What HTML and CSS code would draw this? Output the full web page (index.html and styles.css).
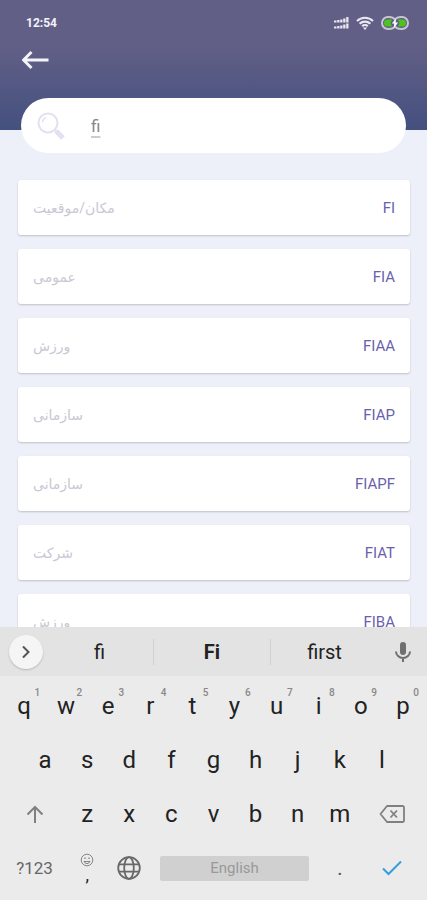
FILE: index.html
```html
<!DOCTYPE html>
<html lang="en">
<head>
    <meta charset="UTF-8">
    <meta name="viewport" content="width=device-width, initial-scale=1.0">
    <title>Search</title>
    <link rel="stylesheet" href="styles.css">
</head>
<body>

    <header class="header">
        <div class="status-bar">
            <span class="time">12:54</span>
            <div class="status-icons">
                <svg width="15" height="12" viewBox="0 0 15 12" fill="#e8e8f2">
                    <path d="M0 3.500h2.500v2H0zM3.200 3h2.300v2.500H3.200zM6.200 2.500h2.300v3H6.200zM9.200 1.500h2.300v4H9.200zM12.200 0h2.300v5.500h-2.300z"/>
                    <path d="M0 9.500h2.500v2H0zM3.200 9h2.300v2.500H3.200zM6.200 8.500h2.300v3H6.200zM9.200 7.500h2.300v4H9.200zM12.200 6.500h2.300v5h-2.300z"/>
                </svg>
                <svg width="18" height="14" viewBox="0 0 18 14" fill="none" stroke="#e8e8f2" stroke-width="2.200">
                    <path d="M1 5a11.500 11.500 0 0 1 16 0M3.600 7.700a7.800 7.800 0 0 1 10.800 0M6.200 10.300a4 4 0 0 1 5.600 0"/>
                    <path d="M9 14l-2.200-2.500h4.400z" fill="#e8e8f2" stroke="none"/>
                </svg>
                <svg width="28" height="14" viewBox="0 0 28 14">
                    <path d="M14 3.500C12.500 1.500 11 1 8 1H7a6 6 0 0 0 0 12h1c3 0 4.500-.5 6-2.500 1.500 2 3 2.500 6 2.500h1a6 6 0 0 0 0-12h-1c-3 0-4.500.5-6 2.500z" fill="#5e5f86" stroke="#c6c6d2" stroke-width="2"/>
                    <path d="M6.500 3.500H11L9.500 7l1.500 3.500H6.500a3.500 3.500 0 0 1 0-7zM17 3.500h4.500a3.500 3.500 0 0 1 0 7H17L18.500 7z" fill="#4cc41c"/>
                    <path d="M15 2.500L10.800 7.500h2.400L12.800 12l4.400-5.500h-2.600z" fill="#fff"/>
                </svg>
            </div>
        </div>
        <a href="#" class="back" aria-label="Back">
            <svg width="28" height="20" viewBox="0 0 28 20" fill="none" stroke="#f3f3fa" stroke-width="3">
                <path d="M26.500 10H2M9.500 2L1.500 10l8 8"/>
            </svg>
        </a>
    </header>

    <form class="search">
        <label for="query" aria-label="Search">
            <svg width="28" height="28" viewBox="0 0 28 28" fill="none" stroke="#e3e0ef">
                <circle cx="11" cy="11" r="9.500" stroke-width="2"/>
                <path d="M5.500 10.500a5.500 5.500 0 0 1 3.500-5" stroke-width="1.500"/>
                <path d="M17.500 17.500l2.500 2.500" stroke-width="2"/>
                <path d="M19 19l7 7" stroke-width="5"/>
            </svg>
        </label>
        <input type="text" id="query" name="query" value="fi">
    </form>

    <main class="results">
        <ul>
            <li><a href="#"><span class="category" lang="fa">مکان/موقعیت</span><span class="code">FI</span></a></li>
            <li><a href="#"><span class="category" lang="fa">عمومی</span><span class="code">FIA</span></a></li>
            <li><a href="#"><span class="category" lang="fa">ورزش</span><span class="code">FIAA</span></a></li>
            <li><a href="#"><span class="category" lang="fa">سازمانی</span><span class="code">FIAP</span></a></li>
            <li><a href="#"><span class="category" lang="fa">سازمانی</span><span class="code">FIAPF</span></a></li>
            <li><a href="#"><span class="category" lang="fa">شرکت</span><span class="code">FIAT</span></a></li>
            <li><a href="#"><span class="category" lang="fa">ورزش</span><span class="code">FIBA</span></a></li>
        </ul>
    </main>

    <section class="keyboard">
        <div class="suggestions">
            <button type="button" class="toggle" aria-label="More">
                <svg width="10" height="14" viewBox="0 0 10 14" fill="none" stroke="#555" stroke-width="2">
                    <path d="M2 1.500L7.500 7 2 12.500"/>
                </svg>
            </button>
            <button type="button">fi</button>
            <button type="button" class="best">Fi</button>
            <button type="button">first</button>
            <button type="button" aria-label="Voice input">
                <svg width="18" height="22" viewBox="0 0 18 22">
                    <rect x="6" y="1" width="6" height="13" rx="3" fill="#707070"/>
                    <path d="M2 10.500a7 6.500 0 0 0 14 0M9 17v4" fill="none" stroke="#707070" stroke-width="2"/>
                </svg>
            </button>
        </div>

        <div class="keys">
            <div class="row">
                <button type="button">q<sup>1</sup></button>
                <button type="button">w<sup>2</sup></button>
                <button type="button">e<sup>3</sup></button>
                <button type="button">r<sup>4</sup></button>
                <button type="button">t<sup>5</sup></button>
                <button type="button">y<sup>6</sup></button>
                <button type="button">u<sup>7</sup></button>
                <button type="button">i<sup>8</sup></button>
                <button type="button">o<sup>9</sup></button>
                <button type="button">p<sup>0</sup></button>
            </div>
            <div class="row row-middle">
                <button type="button">a</button>
                <button type="button">s</button>
                <button type="button">d</button>
                <button type="button">f</button>
                <button type="button">g</button>
                <button type="button">h</button>
                <button type="button">j</button>
                <button type="button">k</button>
                <button type="button">l</button>
            </div>
            <div class="row">
                <button type="button" class="wide" aria-label="Shift">
                    <svg width="18" height="18" viewBox="0 0 18 18" fill="none" stroke="#808080" stroke-width="2">
                        <path d="M9 18V2M1.500 9.500L9 2l7.500 7.500"/>
                    </svg>
                </button>
                <button type="button">z</button>
                <button type="button">x</button>
                <button type="button">c</button>
                <button type="button">v</button>
                <button type="button">b</button>
                <button type="button">n</button>
                <button type="button">m</button>
                <button type="button" class="wide" aria-label="Delete">
                    <svg width="26" height="18" viewBox="0 0 26 18" fill="none" stroke="#808080" stroke-width="1.800">
                        <path d="M8 1h15.500a1.500 1.500 0 0 1 1.500 1.500v13a1.500 1.500 0 0 1-1.500 1.500H8L1.500 9z" stroke-linejoin="round"/>
                        <path d="M11.500 5.500l6.500 7M18 5.500l-6.500 7"/>
                    </svg>
                </button>
            </div>
            <div class="row row-bottom">
                <button type="button" class="symbols">?123</button>
                <button type="button" class="comma">
                    <svg width="14" height="14" viewBox="0 0 14 14" fill="none" stroke="#858585" stroke-width="1">
                        <circle cx="7" cy="7" r="5.800"/>
                        <path d="M4 8.500a3.200 3.200 0 0 0 6 0z"/>
                        <path d="M5 4.500v1.500M9 4.500v1.500" stroke-width="1.300"/>
                    </svg>
                    <span>,</span>
                </button>
                <button type="button" aria-label="Change language">
                    <svg width="24" height="24" viewBox="0 0 24 24" fill="none" stroke="#686868" stroke-width="1.800">
                        <circle cx="12" cy="12" r="10.800"/>
                        <ellipse cx="12" cy="12" rx="4.800" ry="10.800"/>
                        <path d="M2 8.300h20M2 15.700h20"/>
                    </svg>
                </button>
                <button type="button" class="space">English</button>
                <button type="button" class="period">.</button>
                <button type="button" aria-label="Done">
                    <svg width="20" height="16" viewBox="0 0 20 16" fill="none" stroke="#339fdc" stroke-width="2">
                        <path d="M1 8.500l5.500 5.500L19 1.500"/>
                    </svg>
                </button>
            </div>
        </div>
    </section>

</body>
</html>
```
FILE: styles.css
```css
* {
    box-sizing: border-box;
}

body {
    font-family: Roboto, "DejaVu Sans", sans-serif;
    background-color: #edf0f9;
    display: flex;
    flex-direction: column;
    height: 100vh;
    margin: 0;
    overflow: hidden;
}

button {
    font-family: inherit;
    background: none;
    border: none;
    padding: 0;
    color: #222;
    cursor: pointer;
}

svg {
    display: block;
}

.header {
    flex: none;
    background: linear-gradient(#625f86 35%, #44507f);
    padding: 14px 18px 60px 22px;
}

.status-bar {
    display: flex;
    align-items: center;
    justify-content: space-between;
    height: 18px;
    padding-left: 4px;
}

.time {
    color: #f3f3fa;
    font-size: 12px;
    font-weight: bold;
}

.status-icons {
    display: flex;
    align-items: center;
    gap: 7px;
}

.back {
    display: block;
    width: 28px;
    margin-top: 18px;
}

.search {
    flex: none;
    display: flex;
    align-items: center;
    gap: 26px;
    height: 55px;
    margin: -32px 21px 0;
    padding: 0 16px;
    border-radius: 28px;
    background-color: #fff;
}

.search input {
    flex: 1;
    min-width: 0;
    height: 32px;
    border: none;
    outline: none;
    padding: 0;
    color: #888;
    font-family: inherit;
    font-size: 17px;
    line-height: 32px;
    text-decoration: underline #ccc 2px;
    text-underline-offset: 4px;
}

.results {
    flex: 1;
    min-height: 0;
    overflow: hidden;
    padding: 27px 17px 0 18px;
}

.results ul {
    display: flex;
    flex-direction: column;
    gap: 14px;
    list-style: none;
    margin: 0;
    padding: 0;
}

.results a {
    display: flex;
    align-items: center;
    justify-content: space-between;
    height: 55px;
    padding: 0 15px;
    border-radius: 3px;
    background-color: #fff;
    box-shadow: 0 1px 2px rgba(0, 0, 0, 0.2);
    text-decoration: none;
}

.category {
    color: #c9c8d4;
    font-size: 14px;
}

.code {
    color: #6a61ac;
    font-size: 15px;
}

.keyboard {
    flex: none;
    background-color: #ebebeb;
}

.suggestions {
    display: grid;
    grid-template-columns: 46px 1fr 118px 1fr 49px;
    align-items: center;
    height: 49px;
    background-color: #e3e3e3;
}

.suggestions button {
    display: flex;
    align-items: center;
    justify-content: center;
    height: 26px;
    font-size: 20px;
}

.suggestions .best {
    border-left: 1px solid #d0d0d0;
    border-right: 1px solid #d0d0d0;
    font-weight: bold;
}

.suggestions .toggle {
    width: 34px;
    height: 34px;
    margin-left: 9px;
    border-radius: 50%;
    background-color: #f5f5f5;
    box-shadow: 0 1px 2px rgba(0, 0, 0, 0.2);
}

.keys {
    padding: 3px 3px 5px;
}

.row {
    display: flex;
    height: 54px;
}

.row-middle {
    padding: 0 21px;
}

.row-bottom {
    display: grid;
    grid-template-columns: 3fr 2fr 2fr 8fr 2fr 3fr;
}

.row button {
    position: relative;
    flex: 2 1 0;
    display: flex;
    align-items: center;
    justify-content: center;
    font-size: 24px;
}

.row .wide {
    flex-grow: 3;
}

.row sup {
    position: absolute;
    top: 8px;
    right: 5px;
    color: #888;
    font-size: 10px;
    font-weight: 500;
    line-height: 12px;
}

.row .symbols {
    color: #666;
    font-size: 17px;
}

.row .comma {
    flex-direction: column;
    line-height: 16px;
}

.row .comma span {
    font-size: 18px;
}

.row .period {
    color: #555;
    font-size: 20px;
}

.row .space {
    align-self: center;
    height: 25px;
    margin: 0 10px;
    border-radius: 2px;
    background-color: #d0d0d0;
    color: #999;
    font-size: 15px;
}
```
